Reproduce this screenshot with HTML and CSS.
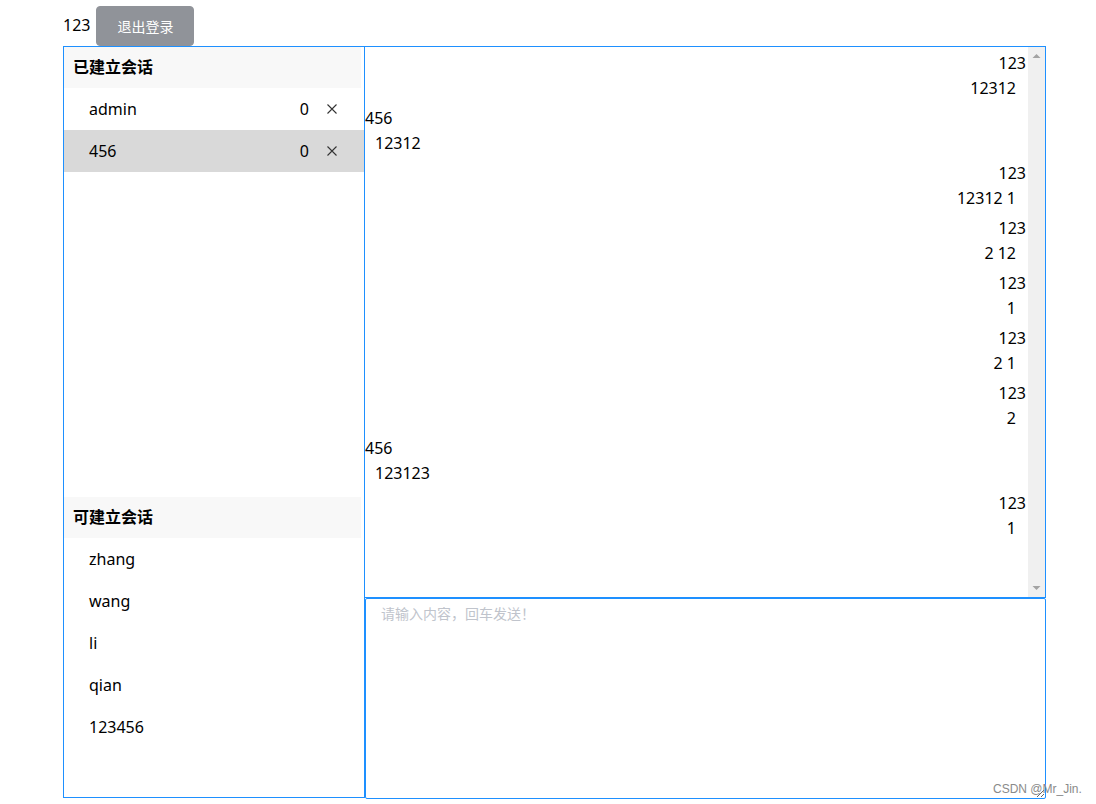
FILE: index.html
```html
<!DOCTYPE html>
<html lang="zh-CN">

<head>
    <meta charset="UTF-8">
    <meta name="viewport" content="width=device-width, initial-scale=1.0">
    <title>聊天</title>
    <link rel="stylesheet" href="styles.css">
</head>

<body>
    <div class="page">
        <div class="topbar">
            <span class="me">123</span>
            <button class="btn-logout" type="button">退出登录</button>
        </div>
        <div class="main">
            <div class="side">
                <div class="section section-open">
                    <div class="section-title">已建立会话</div>
                    <div class="item">
                        <span class="item-name">admin</span>
                        <span class="item-count">0</span>
                        <svg class="item-close" width="10" height="10" viewBox="0 0 10 10">
                            <path d="M0.5 0.5L9.5 9.5M9.5 0.5L0.5 9.5" stroke="#333" stroke-width="1.1" fill="none"/>
                        </svg>
                    </div>
                    <div class="item active">
                        <span class="item-name">456</span>
                        <span class="item-count">0</span>
                        <svg class="item-close" width="10" height="10" viewBox="0 0 10 10">
                            <path d="M0.5 0.5L9.5 9.5M9.5 0.5L0.5 9.5" stroke="#333" stroke-width="1.1" fill="none"/>
                        </svg>
                    </div>
                </div>
                <div class="section section-users">
                    <div class="section-title">可建立会话</div>
                    <div class="item"><span class="item-name">zhang</span></div>
                    <div class="item"><span class="item-name">wang</span></div>
                    <div class="item"><span class="item-name">li</span></div>
                    <div class="item"><span class="item-name">qian</span></div>
                    <div class="item"><span class="item-name">123456</span></div>
                </div>
            </div>
            <div class="chat">
                <div class="chat-body">
                    <div class="messages">
                        <div class="msg right"><div class="msg-name">123</div><div class="msg-text">12312</div></div>
                        <div class="msg"><div class="msg-name">456</div><div class="msg-text">12312</div></div>
                        <div class="msg right"><div class="msg-name">123</div><div class="msg-text">12312 1</div></div>
                        <div class="msg right"><div class="msg-name">123</div><div class="msg-text">2 12</div></div>
                        <div class="msg right"><div class="msg-name">123</div><div class="msg-text">1</div></div>
                        <div class="msg right"><div class="msg-name">123</div><div class="msg-text">2 1</div></div>
                        <div class="msg right"><div class="msg-name">123</div><div class="msg-text">2</div></div>
                        <div class="msg"><div class="msg-name">456</div><div class="msg-text">123123</div></div>
                        <div class="msg right"><div class="msg-name">123</div><div class="msg-text">1</div></div>
                    </div>
                    <!-- 滚动条 -->
                    <div class="scrollbar">
                        <svg width="17" height="17" viewBox="0 0 17 17"><path d="M4.5 11L8.5 7L12.5 11Z" fill="#a3a3a3"/></svg>
                        <svg width="17" height="17" viewBox="0 0 17 17"><path d="M4.5 6L8.5 10L12.5 6Z" fill="#a3a3a3"/></svg>
                    </div>
                </div>
                <textarea class="input" placeholder="请输入内容，回车发送！" autofocus></textarea>
            </div>
        </div>
    </div>
    <div class="watermark">CSDN @Mr_Jin.</div>
</body>

</html>
```

FILE: styles.css
```css
body {
    margin: 0;
    font-family: "Noto Sans", "Noto Sans CJK SC", sans-serif;
    font-size: 16px;
    color: #000;
}

.page {
    margin-left: 63px;
    width: 983px;
}

.topbar {
    display: flex;
    align-items: center;
    gap: 6px;
    height: 40px;
    padding-top: 6px;
}

.me {
    line-height: 20px;
    margin-top: -2px;
}

.btn-logout {
    height: 40px;
    padding: 0 20px;
    border: 1px solid #909399;
    border-radius: 4px;
    background-color: #909399;
    color: #fff;
    font-family: "Noto Sans CJK SC", sans-serif;
    font-size: 14px;
    line-height: 1;
    cursor: pointer;
}

.main {
    display: flex;
}

.side {
    width: 300px;
    height: 750px;
    border: 1px solid #1e90ff;
}

.section-open {
    height: 450px;
}

.section-users {
    height: 300px;
}

.section-title {
    height: 41px;
    margin-right: 3px;
    padding-left: 9px;
    line-height: 38px;
    font-family: "Noto Sans CJK SC", sans-serif;
    font-weight: bold;
    background-color: #f8f8f8;
}

.item {
    display: flex;
    align-items: center;
    height: 42px;
    padding-left: 25px;
}

.item.active {
    background-color: #d9d9d9;
}

.item-name {
    flex: 1;
}

.item-close {
    margin-left: 18px;
    margin-right: 27px;
}

.chat {
    display: flex;
    flex-direction: column;
    width: 681px;
}

.chat-body {
    display: flex;
    height: 550px;
    border: 1px solid #1e90ff;
    border-left: none;
}

.messages {
    flex: 1;
    padding: 4px 2px 0 0;
    overflow: hidden;
}

.scrollbar {
    display: flex;
    flex-direction: column;
    justify-content: space-between;
    width: 17px;
    background-color: #f0f0f0;
}

.scrollbar svg {
    display: block;
}

.msg {
    margin-bottom: 5px;
}

.msg.right {
    text-align: right;
}

.msg-name,
.msg-text {
    line-height: 25px;
}

.msg-text {
    padding: 0 10px;
}

.input {
    display: block;
    box-sizing: border-box;
    width: 681px;
    height: 201px;
    margin: 0;
    padding: 4px 15px 5px;
    border: 1px solid #1e90ff;
    border-radius: 2px;
    outline: none;
    font-family: "Noto Sans CJK SC", sans-serif;
    font-size: 14px;
    line-height: 1.5;
    color: #606266;
}

.input::placeholder {
    color: #c0c4cc;
}

.watermark {
    position: absolute;
    left: 993px;
    top: 780px;
    font-family: "Liberation Sans", sans-serif;
    font-size: 12px;
    line-height: 18px;
    color: #8a8a8a;
}
```
